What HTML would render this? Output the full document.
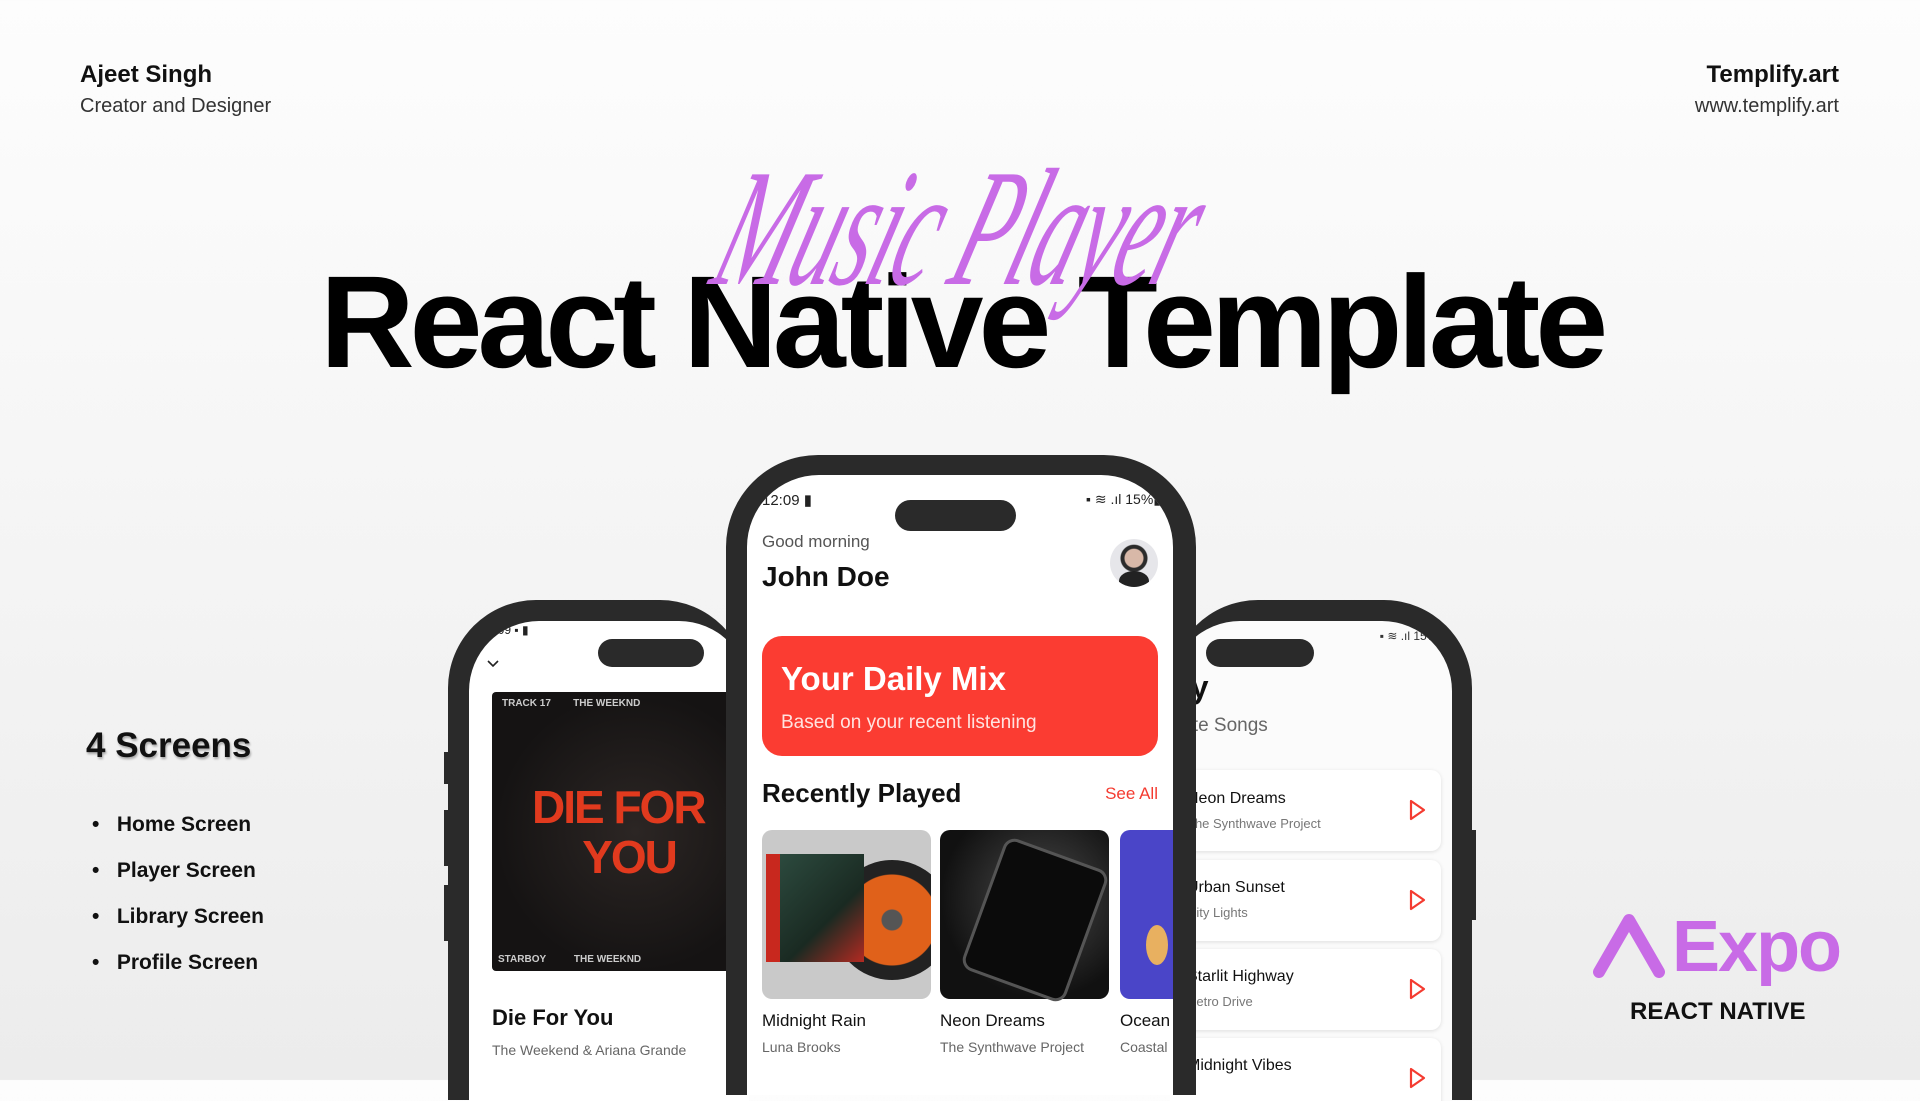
<!DOCTYPE html>
<html><head><meta charset="utf-8"><style>
*{margin:0;padding:0;box-sizing:border-box}
body{width:1920px;height:1080px;overflow:hidden;position:relative;font-family:"Liberation Sans",sans-serif;background:linear-gradient(#fdfdfd,#ececec)}
.a{position:absolute;white-space:nowrap}
.phone{position:absolute;background:#2a2a2a;border-radius:88px 88px 0 0}
.scr{position:absolute;background:#fff;overflow:hidden;border-radius:70px 70px 0 0}
.isl{position:absolute;background:#2a2a2a;border-radius:20px}
.card{position:absolute;background:#fff;border-radius:10px;box-shadow:0 1px 4px rgba(0,0,0,.12)}
.t{font-size:16px;color:#111;font-weight:500}
.s{font-size:13px;color:#777}
</style></head><body>

<div class="a" style="left:80px;top:61px;font-size:24px;font-weight:bold;color:#111">Ajeet Singh</div>
<div class="a" style="left:80px;top:95px;font-size:20px;color:#333">Creator and Designer</div>
<div class="a" style="right:81px;top:61px;font-size:24px;font-weight:bold;color:#111">Templify.art</div>
<div class="a" style="right:81px;top:95px;font-size:20px;color:#333">www.templify.art</div>

<div class="a" style="left:320px;top:256px;font-size:131px;font-weight:bold;letter-spacing:-5px;color:#000;line-height:1">React Native Template</div>
<div class="a" style="left:752px;top:146px;font-size:108px;line-height:1;font-family:'Liberation Serif',serif;font-style:italic;color:#c86be6;transform:skewX(-18deg) scale(0.85,1.55);transform-origin:left top;letter-spacing:-2px">Music Player</div>

<div class="a" style="left:86px;top:726px;font-size:35px;font-weight:bold;color:#111;text-shadow:1px 2px 2px rgba(0,0,0,.3)">4 Screens</div>
<div class="a" style="left:92px;top:802px;font-size:21px;font-weight:bold;color:#111;line-height:46px">•&nbsp;&nbsp;&nbsp;Home Screen<br>•&nbsp;&nbsp;&nbsp;Player Screen<br>•&nbsp;&nbsp;&nbsp;Library Screen<br>•&nbsp;&nbsp;&nbsp;Profile Screen</div>

<svg class="a" style="left:1593px;top:912px" width="72" height="66" viewBox="0 0 72 66"><path d="M6 60 L36 8 L66 60" fill="none" stroke="#c86be6" stroke-width="12" stroke-linejoin="round" stroke-linecap="round"/></svg>
<div class="a" style="left:1672px;top:906px;font-size:72px;font-weight:bold;color:#c86be6;letter-spacing:-2px">Expo</div>
<div class="a" style="left:1630px;top:998px;font-size:24px;font-weight:bold;color:#111">REACT NATIVE</div>

<!-- left phone -->
<div class="phone" style="left:448px;top:600px;width:300px;height:500px"></div>
<div class="a" style="left:444px;top:752px;width:5px;height:32px;background:#2a2a2a"></div>
<div class="a" style="left:444px;top:810px;width:5px;height:56px;background:#2a2a2a"></div>
<div class="a" style="left:444px;top:885px;width:5px;height:56px;background:#2a2a2a"></div>
<div class="scr" style="left:469px;top:621px;width:280px;height:480px">
 <div class="a" style="left:12px;top:2px;font-size:12px;color:#222">12:09 ▪ ▮</div>
 <div class="isl" style="left:129px;top:18px;width:106px;height:28px"></div>
 <svg class="a" style="left:17px;top:38px" width="14" height="10"><path d="M2 2 L7 7 L12 2" fill="none" stroke="#222" stroke-width="1.6"/></svg>
 <div class="a" style="left:23px;top:71px;width:260px;height:279px;background:radial-gradient(circle at 55% 50%,#2c2624,#151313 70%);border-radius:4px">
  <div class="a" style="left:10px;top:6px;font-size:10px;color:#ccc;font-weight:bold">TRACK 17&nbsp;&nbsp;&nbsp;&nbsp;&nbsp;&nbsp;&nbsp;&nbsp;THE WEEKND</div>
  <div class="a" style="left:40px;top:90px;font-size:46px;line-height:50px;font-weight:900;color:#e13a1e;text-align:center;letter-spacing:-2px">DIE FOR<br>&nbsp;&nbsp;YOU</div>
  <div class="a" style="left:6px;top:262px;font-size:10px;color:#ccc;font-weight:bold">STARBOY&nbsp;&nbsp;&nbsp;&nbsp;&nbsp;&nbsp;&nbsp;&nbsp;&nbsp;&nbsp;THE WEEKND</div>
 </div>
 <div class="a" style="left:23px;top:384px;font-size:22px;font-weight:bold;color:#111">Die For You</div>
 <div class="a" style="left:23px;top:421px;font-size:14px;color:#666">The Weekend &amp; Ariana Grande</div>
</div>

<!-- right phone -->
<div class="phone" style="left:1170px;top:600px;width:302px;height:500px"></div>
<div class="a" style="left:1471px;top:830px;width:5px;height:90px;background:#2a2a2a"></div>
<div class="scr" style="left:1170px;top:621px;width:282px;height:480px;background:#fbfbfb">
 <div class="a" style="right:8px;top:8px;font-size:12px;color:#333">▪ ≋ .ıl 15%▮</div>
 <div class="isl" style="left:36px;top:18px;width:108px;height:28px"></div>
 <div class="a" style="left:-70px;top:48px;font-size:32px;font-weight:bold;color:#111">Library</div>
 <div class="a" style="left:-30px;top:94px;font-size:19px;color:#666">Favorite Songs</div>
 <div class="card" style="left:-20px;top:149px;width:291px;height:81px"></div>
 <div class="card" style="left:-20px;top:239px;width:291px;height:81px"></div>
 <div class="card" style="left:-20px;top:328px;width:291px;height:81px"></div>
 <div class="card" style="left:-20px;top:417px;width:291px;height:81px"></div>
 <div class="a t" style="left:17px;top:169px">Neon Dreams</div><div class="a s" style="left:17px;top:195px">The Synthwave Project</div>
 <div class="a t" style="left:17px;top:258px">Urban Sunset</div><div class="a s" style="left:17px;top:284px">City Lights</div>
 <div class="a t" style="left:17px;top:347px">Starlit Highway</div><div class="a s" style="left:17px;top:373px">Retro Drive</div>
 <div class="a t" style="left:17px;top:436px">Midnight Vibes</div>
 <svg class="a" style="left:238px;top:177px" width="20" height="24"><path d="M3 3 L16 12 L3 21Z" fill="none" stroke="#f43b30" stroke-width="2.2" stroke-linejoin="round"/></svg>
 <svg class="a" style="left:238px;top:267px" width="20" height="24"><path d="M3 3 L16 12 L3 21Z" fill="none" stroke="#f43b30" stroke-width="2.2" stroke-linejoin="round"/></svg>
 <svg class="a" style="left:238px;top:356px" width="20" height="24"><path d="M3 3 L16 12 L3 21Z" fill="none" stroke="#f43b30" stroke-width="2.2" stroke-linejoin="round"/></svg>
 <svg class="a" style="left:238px;top:445px" width="20" height="24"><path d="M3 3 L16 12 L3 21Z" fill="none" stroke="#f43b30" stroke-width="2.2" stroke-linejoin="round"/></svg>
</div>

<!-- center phone -->
<div class="phone" style="left:726px;top:455px;width:470px;height:640px;border-radius:92px 92px 0 0"></div>
<div class="scr" style="left:747px;top:475px;width:426px;height:620px;border-radius:72px 72px 0 0">
 <div class="a" style="left:15px;top:16px;font-size:15px;color:#222">12:09 ▮</div>
 <div class="a" style="right:12px;top:16px;font-size:14px;color:#222">▪ ≋ .ıl 15%▮</div>
 <div class="isl" style="left:148px;top:25px;width:121px;height:31px"></div>
 <div class="a" style="left:15px;top:57px;font-size:17px;color:#555">Good morning</div>
 <div class="a" style="left:15px;top:86px;font-size:28px;font-weight:bold;color:#111">John Doe</div>
 <div class="a" style="left:363px;top:64px;width:48px;height:48px;border-radius:50%;background:radial-gradient(circle at 50% 40%,#d8b8a8 0 9px,#2b2b2b 10px 13px,#e6e6ea 14px);overflow:hidden"><div class="a" style="left:9px;top:32px;width:30px;height:20px;border-radius:50% 50% 0 0;background:#222"></div></div>
 <div class="a" style="left:15px;top:161px;width:396px;height:120px;background:#fb3c32;border-radius:20px">
  <div class="a" style="left:19px;top:24px;font-size:33px;font-weight:bold;color:#fff">Your Daily Mix</div>
  <div class="a" style="left:19px;top:76px;font-size:19px;color:#ffe3e0">Based on your recent listening</div>
 </div>
 <div class="a" style="left:15px;top:303px;font-size:26px;font-weight:bold;color:#111">Recently Played</div>
 <div class="a" style="right:15px;top:309px;font-size:17px;color:#f43b30">See All</div>
 <div class="a" style="left:15px;top:355px;width:169px;height:169px;border-radius:10px;background:#c9c9c9;overflow:hidden">
  <div class="a" style="left:70px;top:30px;width:120px;height:120px;border-radius:50%;background:radial-gradient(circle,#555 0 10px,#e0611a 11px 45px,#222 46px)"></div>
  <div class="a" style="left:4px;top:24px;width:98px;height:108px;background:linear-gradient(135deg,#2c4a3e,#1a2a22 60%,#b32a22);border-left:14px solid #c8281e"></div>
 </div>
 <div class="a" style="left:193px;top:355px;width:169px;height:169px;border-radius:10px;background:radial-gradient(circle at 60% 40%,#4a4a4a,#111 70%)">
  <div class="a" style="left:40px;top:20px;width:110px;height:140px;border:3px solid #555;border-radius:12px;transform:rotate(20deg);background:#0b0b0b"></div>
 </div>
 <div class="a" style="left:373px;top:355px;width:60px;height:169px;border-radius:10px 0 0 10px;background:#4a45c8">
  <div class="a" style="left:26px;top:95px;width:22px;height:40px;border-radius:50%;background:#e8b060"></div>
 </div>
 <div class="a" style="left:15px;top:536px;font-size:17px;font-weight:500;color:#111">Midnight Rain</div>
 <div class="a" style="left:15px;top:564px;font-size:14px;color:#666">Luna Brooks</div>
 <div class="a" style="left:193px;top:536px;font-size:17px;font-weight:500;color:#111">Neon Dreams</div>
 <div class="a" style="left:193px;top:564px;font-size:14px;color:#666">The Synthwave Project</div>
 <div class="a" style="left:373px;top:536px;font-size:17px;font-weight:500;color:#111">Ocean</div>
 <div class="a" style="left:373px;top:564px;font-size:14px;color:#666">Coastal</div>
</div>
</body></html>
